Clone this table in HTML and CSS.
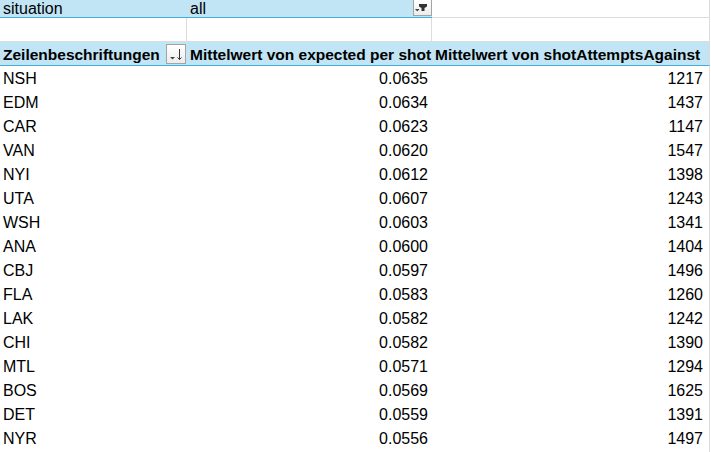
FILE: index.html
```html
<!DOCTYPE html>
<html lang="de">
<head>
<meta charset="utf-8">
<title>Pivot</title>
<link rel="stylesheet" href="styles.css">
</head>
<body>
<div class="sheet">
  <div class="row filter-row">
    <div class="cell blue">situation</div>
    <div class="cell blue with-btn">
      <span>all</span>
      <span class="btn btn-top">
        <svg width="17" height="15" viewBox="0 0 17 15">
          <path d="M1 9h4.5l-2.25 2.5z" fill="#444"/>
          <path d="M5 4h8v2.5l-2.5 1.5v3h-3v-3l-2.5-1.5z" fill="#333"/>
        </svg>
      </span>
    </div>
    <div class="cell grid"></div>
    <div class="cell"></div>
  </div>
  <div class="row">
    <div class="cell grid"></div>
    <div class="cell grid"></div>
    <div class="cell grid"></div>
    <div class="cell"></div>
  </div>
  <div class="row head-row">
    <div class="cell blue bold with-btn">
      <span>Zeilenbeschriftungen</span>
      <span class="btn btn-head">
        <svg width="18" height="18" viewBox="0 0 18 18">
          <path d="M3 12h5l-2.5 2.5z" fill="#444"/>
          <path d="M12.5 4v10.5M10.5 12.5l2 2 2-2" stroke="#333" stroke-width="1" fill="none"/>
        </svg>
      </span>
    </div>
    <div class="cell blue bold">Mittelwert von expected per shot</div>
    <div class="cell blue bold edge">Mittelwert von shotAttemptsAgainst</div>
    <div class="cell"></div>
  </div>
  <div class="row data"><div class="cell">NSH</div><div class="cell num">0.0635</div><div class="cell num edge">1217</div><div class="cell"></div></div>
  <div class="row data"><div class="cell">EDM</div><div class="cell num">0.0634</div><div class="cell num edge">1437</div><div class="cell"></div></div>
  <div class="row data"><div class="cell">CAR</div><div class="cell num">0.0623</div><div class="cell num edge">1147</div><div class="cell"></div></div>
  <div class="row data"><div class="cell">VAN</div><div class="cell num">0.0620</div><div class="cell num edge">1547</div><div class="cell"></div></div>
  <div class="row data"><div class="cell">NYI</div><div class="cell num">0.0612</div><div class="cell num edge">1398</div><div class="cell"></div></div>
  <div class="row data"><div class="cell">UTA</div><div class="cell num">0.0607</div><div class="cell num edge">1243</div><div class="cell"></div></div>
  <div class="row data"><div class="cell">WSH</div><div class="cell num">0.0603</div><div class="cell num edge">1341</div><div class="cell"></div></div>
  <div class="row data"><div class="cell">ANA</div><div class="cell num">0.0600</div><div class="cell num edge">1404</div><div class="cell"></div></div>
  <div class="row data"><div class="cell">CBJ</div><div class="cell num">0.0597</div><div class="cell num edge">1496</div><div class="cell"></div></div>
  <div class="row data"><div class="cell">FLA</div><div class="cell num">0.0583</div><div class="cell num edge">1260</div><div class="cell"></div></div>
  <div class="row data"><div class="cell">LAK</div><div class="cell num">0.0582</div><div class="cell num edge">1242</div><div class="cell"></div></div>
  <div class="row data"><div class="cell">CHI</div><div class="cell num">0.0582</div><div class="cell num edge">1390</div><div class="cell"></div></div>
  <div class="row data"><div class="cell">MTL</div><div class="cell num">0.0571</div><div class="cell num edge">1294</div><div class="cell"></div></div>
  <div class="row data"><div class="cell">BOS</div><div class="cell num">0.0569</div><div class="cell num edge">1625</div><div class="cell"></div></div>
  <div class="row data"><div class="cell">DET</div><div class="cell num">0.0559</div><div class="cell num edge">1391</div><div class="cell"></div></div>
  <div class="row data"><div class="cell">NYR</div><div class="cell num">0.0556</div><div class="cell num edge">1497</div><div class="cell"></div></div>
  <div class="row data"><div class="cell"></div><div class="cell num"></div><div class="cell num edge"></div><div class="cell"></div></div>
</div>
</body>
</html>
```

FILE: styles.css
```css
html, body {
  margin: 0;
  padding: 0;
  background: #ffffff;
  overflow: hidden;
}

body {
  font-family: "Liberation Sans", Arial, sans-serif;
  font-size: 16px;
  color: #000;
}

.sheet {
  width: 711px;
}

.row {
  display: grid;
  grid-template-columns: 187px 245px 278px 1fr;
  height: 24px;
}

.cell {
  box-sizing: border-box;
  height: 24px;
  padding: 2px 3px 0 3px;
  line-height: 22px;
  white-space: nowrap;
  overflow: hidden;
}

.filter-row {
  height: 18px;
}

.filter-row .cell {
  height: 18px;
  padding-top: 0;
  line-height: 17px;
}

.grid {
  border-right: 1px solid #dcdcdc;
  border-bottom: 1px solid #dcdcdc;
}

.edge {
  border-right: 1px solid #dcdcdc;
}

.blue {
  background: #c1e5f5;
  border-bottom: 1px solid #45aee0;
}

.head-row .cell {
  background: #c1e5f5;
  border-bottom: 1px solid #45aee0;
}

.head-row .cell:last-child {
  background: transparent;
  border-bottom: none;
}

.head-row .edge {
  border-right: 1px solid #dcdcdc;
}

.bold {
  font-weight: bold;
  font-size: 15.5px;
}

.with-btn {
  display: flex;
  align-items: flex-start;
  justify-content: space-between;
  padding-right: 0;
}

.btn {
  box-sizing: border-box;
  display: block;
  border: 1px solid #a3a3a3;
  background: linear-gradient(#ffffff, #ececec);
  line-height: 0;
}

.btn svg {
  display: block;
}

.btn-top {
  width: 19px;
  height: 16px;
  border-top: none;
}

.btn-head {
  width: 20px;
  height: 20px;
  margin-right: 1px;
}

.num {
  text-align: right;
  padding-right: 4px;
}

.data .edge {
  padding-right: 6px;
}
```
